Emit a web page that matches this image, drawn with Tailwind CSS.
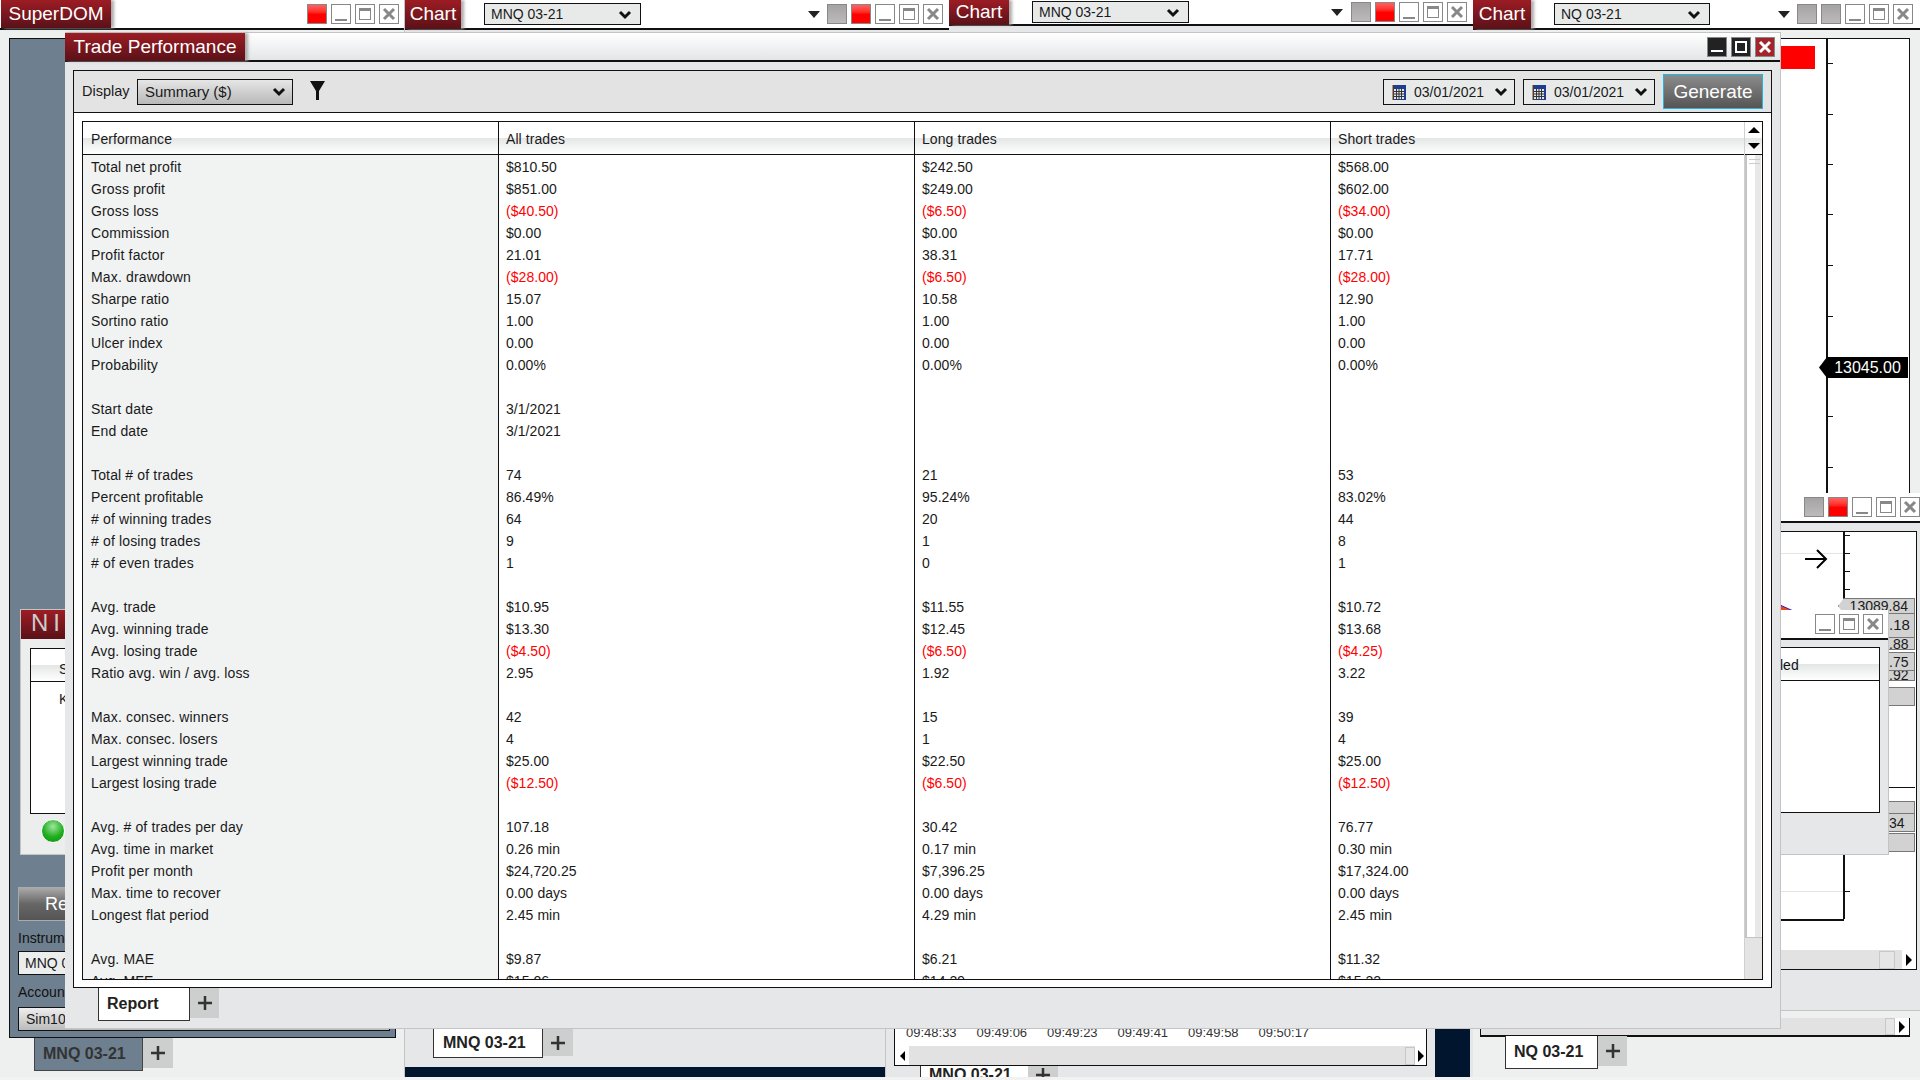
<!DOCTYPE html>
<html lang="en">
<head>
  <meta charset="UTF-8" />
  <title>Trade Performance</title>
  <script src="https://cdn.jsdelivr.net/npm/@tailwindcss/browser@4"></script>
</head>
<body class="bg-[#e5e7e9]">
<div class="relative w-[1920px] h-[1080px] overflow-hidden bg-[#e5e7e9] font-['Liberation_Sans',sans-serif] text-[14px] text-[#1a1a1a]">

  <!-- Left window: SuperDOM -->
  <div class="absolute left-0 top-0 w-[405px] h-[1077px] bg-[#eef0f0] border-r border-[#c4c4c4]">
    <div class="flex items-center h-[30px] bg-white border-b-2 border-[#111] pl-px">
      <div class="h-[28px] w-[110px] flex items-center justify-center text-[19px] text-white bg-linear-to-b from-[#9d1c24] to-[#5b1118] shadow-[3px_0_3px_#aaa]">SuperDOM</div>
      <div class="ml-[196px] flex gap-1" data-btns="red min max close"></div>
    </div>
    <div class="absolute left-[9px] top-[38px] w-[387px] h-[1000px] bg-[#6e7f8f] border border-[#111]">
      <div class="absolute left-[10px] top-[570px] w-[60px] h-[246px] bg-[#eceeee] border border-[#c4c4c4]">
        <div class="h-[29px] pl-[10px] leading-[26px] text-[24px] text-[#ccc] tracking-[5px] overflow-hidden bg-linear-to-b from-[#9d1c24] to-[#5b1118]">NI</div>
        <div class="mx-[9px] mt-[9px] h-[166px] bg-white border border-[#111]">
          <div class="h-[33px] border-b border-[#111] pl-[28px] pt-[10px] bg-[linear-gradient(#fff_50%,#e4e6e6_50%,#fff)]">S</div>
          <div class="pl-[28px] pt-[7px]">K</div>
        </div>
        <div class="ml-[20px] mt-[5px] w-[24px] h-[24px] rounded-full border border-white bg-[radial-gradient(circle_at_50%_30%,#9fe59f,#1fae1f_55%,#0f8f0f)]"></div>
      </div>
      <div class="absolute left-[8px] top-[848px] w-[60px] h-[34px] pl-[26px] flex items-center text-[18px] text-white border border-[#aaa] bg-linear-to-b from-[#aaa] via-[#666] to-[#555]">Re</div>
      <div class="absolute left-[8px] top-[889px] text-[#111]">Instrum</div>
      <div class="absolute left-[8px] top-[912px] w-[60px] h-[24px] pl-[6px] flex items-center bg-[#eceeee] border border-[#111]">MNQ 0</div>
      <div class="absolute left-[8px] top-[943px] text-[#111]">Accoun</div>
      <div class="absolute left-[8px] top-[968px] w-[372px] h-[24px] pl-[7px] flex items-center border border-[#111] bg-linear-to-b from-[#eee] to-[#bbb]">Sim10</div>
    </div>
    <div class="absolute left-[34px] top-[1038px] flex">
      <div class="w-[109px] h-[33px] flex items-center pl-[8px] font-bold text-[16px] text-[#333] bg-[#6e7f8f] border border-t-0 border-[#444]">MNQ 03-21</div>
      <div class="w-[30px] h-[30px] flex items-center justify-center bg-[#cdcfcf] text-[#333]" data-icon="plus"></div>
    </div>
  </div>

  <!-- Middle windows -->
  <div class="absolute left-[405px] top-0 w-[544px] h-[30px] flex items-center pl-[79px] bg-white border-b-2 border-[#111]">
    <div class="w-[157px]" data-select="MNQ 03-21"></div>
    <div class="ml-[167px] w-[10px]" data-icon="caret"></div>
    <div class="ml-[9px] flex gap-1" data-btns="grey red min max close"></div>
  </div>
  <div class="absolute left-[405px] top-0 w-[56px] h-[29px] flex items-center justify-center text-[19px] text-white bg-linear-to-b from-[#9d1c24] to-[#5b1118] shadow-[3px_0_3px_#aaa]">Chart</div>

  <div class="absolute left-[949px] top-0 w-[524px] h-[26px] flex items-center pl-[83px] bg-white border-b-2 border-[#111]">
    <div class="w-[157px]" data-select="MNQ 03-21"></div>
    <div class="ml-[142px] w-[10px]" data-icon="caret"></div>
    <div class="ml-[10px] flex gap-1" data-btns="grey red min max close"></div>
  </div>
  <div class="absolute left-[949px] top-0 w-[60px] h-[25px] flex items-center justify-center text-[19px] text-white bg-linear-to-b from-[#9d1c24] to-[#5b1118] shadow-[3px_0_3px_#aaa]">Chart</div>

  <!-- Middle bottom -->
  <div class="absolute left-[405px] top-[1067px] w-[480px] h-[13px] bg-[#01152f]"></div>
  <div class="absolute left-[433px] top-[1029px] flex">
    <div class="w-[110px] h-[29px] flex items-center pl-[9px] font-bold text-[16px] text-[#222] bg-white border border-t-0 border-[#333]">MNQ 03-21</div>
    <div class="w-[30px] h-[27px] flex items-center justify-center bg-[#cdcfcf] text-[#333]" data-icon="plus"></div>
  </div>
  <div class="absolute left-[885px] top-[1029px] w-[1px] h-[51px] bg-[#c4c4c4]"></div>
  <div class="absolute left-[894px] top-[1020px] w-[533px] h-[46px] bg-white border border-t-0 border-[#111]">
    <div class="flex pl-[11px] gap-[20.5px] pt-[3px] text-[13px] text-[#333]"><span class="w-[50px] shrink-0">09:48:33</span><span class="w-[50px] shrink-0">09:49:06</span><span class="w-[50px] shrink-0">09:49:23</span><span class="w-[50px] shrink-0">09:49:41</span><span class="w-[50px] shrink-0">09:49:58</span><span class="w-[50px] shrink-0">09:50:17</span></div>
    <div class="absolute left-0 right-0 bottom-0 h-[19px] flex items-center justify-between bg-[#e2e2e2]">
      <div class="w-[14px] h-full flex items-center justify-center bg-white" data-icon="left"></div>
      <div class="ml-auto w-[10px] h-[18px] bg-[#e6e6e6] border border-[#c8c8c8]"></div>
      <div class="w-[11px] h-full flex items-center justify-center bg-white" data-icon="right"></div>
    </div>
  </div>
  <div class="absolute left-[920px] top-[1066px] flex">
    <div class="w-[108px] h-[14px] overflow-hidden pl-[8px] leading-[18px] font-bold text-[16px] text-[#222] bg-white border-l border-[#333]">MNQ 03-21</div>
    <div class="w-[30px] h-[14px] overflow-hidden flex justify-center bg-[#cdcfcf] text-[#333] pt-[2px]" data-icon="plus"></div>
  </div>
  <div class="absolute left-[1435px] top-[1029px] w-[35px] h-[51px] bg-[#01152f]"></div>
  <div class="absolute left-0 top-[1077px] w-[1920px] h-[3px] bg-[#f2f2f2]"></div>

  <!-- Right window: NQ chart -->
  <div class="absolute left-[1473px] top-0 w-[447px] h-[1077px] bg-[#eef0f0]">
    <div class="flex items-center h-[30px] pl-[81px] bg-white border-b-2 border-[#111]">
      <div class="w-[156px]" data-select="NQ 03-21"></div>
      <div class="ml-[68px] w-[10px]" data-icon="caret"></div>
      <div class="ml-[9px] flex gap-1" data-btns="grey grey min max close"></div>
    </div>
    <div class="absolute left-0 top-0 w-[58px] h-[29px] flex items-center justify-center text-[19px] text-white bg-linear-to-b from-[#9d1c24] to-[#5b1118] shadow-[3px_0_3px_#aaa]">Chart</div>
    <div class="absolute left-[6px] top-[38px] w-[431px] h-[500px] bg-white border border-[#111]">
      <div class="absolute left-[301px] top-[7px] w-[34px] h-[23px] bg-[#ff0000]"></div>
      <div class="absolute left-[346px] top-0 w-[2px] h-[500px] bg-[#111]"></div>
      <div class="absolute left-[348px] top-[24px] w-[5px] h-px bg-[#111]"></div>
      <div class="absolute left-[348px] top-[75px] w-[5px] h-px bg-[#111]"></div>
      <div class="absolute left-[348px] top-[125px] w-[5px] h-px bg-[#111]"></div>
      <div class="absolute left-[348px] top-[175px] w-[5px] h-px bg-[#111]"></div>
      <div class="absolute left-[348px] top-[226px] w-[5px] h-px bg-[#111]"></div>
      <div class="absolute left-[348px] top-[277px] w-[5px] h-px bg-[#111]"></div>
      <div class="absolute left-[348px] top-[377px] w-[5px] h-px bg-[#111]"></div>
      <div class="absolute left-[348px] top-[428px] w-[5px] h-px bg-[#111]"></div>
      <div class="absolute left-[339px] top-[318px] w-[89px] h-[21px] flex items-center justify-center pl-[8px] text-[16px] text-white bg-[#000] [clip-path:polygon(8px_0,100%_0,100%_100%,8px_100%,0_50%)]">13045.00</div>
    </div>
  </div>

  <!-- Window with grey/red buttons behind -->
  <div class="absolute left-[1780px] top-[493px] w-[140px] h-[518px] bg-[#e5e7e9] border-b border-[#c4c4c4]">
    <div class="flex items-center justify-end h-[30px] bg-white border-b-2 border-[#111] gap-1" data-btns="grey red min max close"></div>
    <div class="absolute left-0 top-[38px] w-[137px] h-[439px] bg-white border border-l-0 border-[#111]">
      <div class="absolute left-[63px] top-0 w-[2px] h-[387px] bg-[#111]"></div>
      <div class="absolute left-[65px] top-[3px] w-[5px] h-px bg-[#111]"></div>
      <div class="absolute left-[65px] top-[21px] w-[5px] h-px bg-[#111]"></div>
      <div class="absolute left-[65px] top-[39px] w-[5px] h-px bg-[#111]"></div>
      <div class="absolute left-[65px] top-[57px] w-[5px] h-px bg-[#111]"></div>
      <div class="absolute left-[65px] top-[359px] w-[5px] h-px bg-[#111]"></div>
      <div class="absolute left-0 top-[21px] w-[63px] h-px bg-[#e4e4e4]"></div>
      <div class="absolute left-0 top-[359px] w-[63px] h-px bg-[#e4e4e4]"></div>
      <div class="absolute left-0 top-[387px] w-[64px] h-[2px] bg-[#111]"></div>
      <svg class="absolute left-[24px] top-[16px]" width="24" height="22" viewBox="0 0 24 22"><path d="M1 11h20M13 2l9 9-9 9" fill="none" stroke="#000" stroke-width="2"/></svg>
      <svg class="absolute left-0 top-[73px]" width="60" height="10" viewBox="0 0 60 10"><path d="M0 0L20 9H0Z" fill="#f04a10"/><path d="M0 0L20 9" stroke="#2020e0" fill="none"/><path d="M20 9H48" stroke="#d8b060" stroke-width="2"/></svg>
      <div class="absolute left-[58px] top-[66px] w-[77px] h-[16px] flex items-center justify-end pr-[6px] leading-[14px] text-[14px] bg-[#d2d2d2] border border-[#777] [clip-path:polygon(6px_0,100%_0,100%_100%,6px_100%,0_50%)]">13089.84</div>
      <div class="absolute left-[105px] top-[81px] w-[30px] h-[25px] pl-[3px] text-[15px] bg-[#d2d2d2] border border-[#777]">.18</div>
      <div class="absolute left-[105px] top-[105px] w-[30px] h-[13px] leading-[12px] pl-[3px] bg-[#d2d2d2] border border-[#777]">.88</div>
      <div class="absolute left-[105px] top-[120px] w-[30px] h-[19px] leading-[18px] pl-[3px] bg-[#d2d2d2] border border-[#777]">.75</div>
      <div class="absolute left-[105px] top-[138px] w-[30px] h-[11px] leading-[9px] pl-[3px] bg-[#d2d2d2] border border-[#777] overflow-hidden">.92</div>
      <div class="absolute left-[105px] top-[155px] w-[30px] h-[19px] bg-[#d2d2d2] border border-[#777]"></div>
      <div class="absolute left-[105px] top-[255px] w-[30px] h-px bg-[#111]"></div>
      <div class="absolute left-[105px] top-[269px] w-[30px] h-[13px] bg-[#d2d2d2] border border-[#777]"></div>
      <div class="absolute left-[105px] top-[281px] w-[30px] h-[19px] leading-[18px] pl-[3px] bg-[#d2d2d2] border border-[#777]">34</div>
      <div class="absolute left-[105px] top-[301px] w-[30px] h-[19px] bg-[#d2d2d2] border border-[#777]"></div>
      <div class="absolute left-0 right-0 bottom-0 h-[19px] flex items-center justify-end bg-[#e2e2e2]">
        <div class="w-[16px] h-[18px] bg-[#e6e6e6] border border-[#c8c8c8]"></div>
        <div class="ml-[7px] w-[14px] h-full flex items-center justify-center bg-white" data-icon="right"></div>
      </div>
    </div>
  </div>
  <!-- Strip under that window -->
  <div class="absolute left-[1781px] top-[1018px] w-[129px] h-[19px] flex items-center justify-end bg-[#e2e2e2] border-b-2 border-[#111] border-r">
    <div class="w-[10px] h-[17px] bg-[#e6e6e6] border border-[#c8c8c8]"></div>
    <div class="w-[14px] h-full flex items-center justify-center bg-white" data-icon="right"></div>
  </div>
  <div class="absolute left-[1480px] top-[1018px] w-[301px] h-[19px] bg-[#e2e2e2] border-b-2 border-l border-[#111]"></div>
  <div class="absolute left-[1505px] top-[1036px] flex">
    <div class="w-[93px] h-[33px] flex items-center pl-[8px] font-bold text-[16px] text-[#222] bg-white border border-t-0 border-[#333]">NQ 03-21</div>
    <div class="w-[29px] h-[30px] flex items-center justify-center bg-[#cdcfcf] text-[#333]" data-icon="plus"></div>
  </div>

  <!-- Small window over the chart -->
  <div class="absolute left-[1780px] top-[610px] w-[109px] h-[245px] bg-[#e5e7e9] border-r border-b border-[#c4c4c4]">
    <div class="flex items-center justify-end h-[30px] bg-white border-b-2 border-[#111] gap-1 pr-[5px]" data-btns="min max close"></div>
    <div class="absolute left-0 top-[37px] w-[100px] h-[166px] bg-white border border-l-0 border-[#111]">
      <div class="h-[33px] border-b border-[#111] text-[#111] pt-[7px] bg-[linear-gradient(#fff_50%,#e4e6e6_50%,#fff)]">led</div>
    </div>
  </div>

  <!-- Trade Performance window -->
  <div class="absolute left-[65px] top-[32px] w-[1716px] h-[997px] flex flex-col bg-[#e5e7e9] border-t border-r border-b border-[#c4c4c4]">
    <div class="relative flex items-center justify-end h-[29px] pr-[5px] gap-1 bg-linear-to-b from-white to-[#e3e5e7] border-b-2 border-[#111]">
      <div class="absolute left-0 top-0 w-[180px] h-[28px] flex items-center justify-center text-[19px] text-white bg-linear-to-b from-[#9d1c24] to-[#5b1118] shadow-[3px_0_3px_#aaa]">Trade Performance</div>
      <div class="w-[20px] h-[20px] flex items-center justify-center bg-[#222] border border-[#888]" data-icon="dmin"></div>
      <div class="w-[20px] h-[20px] flex items-center justify-center bg-[#222] border border-[#888]" data-icon="dmax"></div>
      <div class="w-[20px] h-[20px] flex items-center justify-center bg-[#a3252c] border border-[#888]" data-icon="dclose"></div>
    </div>
    <div class="mx-[8px] mt-[8px] h-[918px] flex flex-col bg-white border border-[#111]">
      <div class="flex items-center h-[42px] px-[8px] bg-[#e3e3e3] border-b border-[#111]">
        <span class="w-[47px] text-[14.5px]">Display</span>
        <div class="ml-[8px] w-[156px] h-[26px] flex items-center justify-between pl-[7px] pr-[6px] pt-px text-[15px] border border-[#111] bg-linear-to-b from-[#e6e6e6] to-[#b8b8b8]">Summary ($)<span data-icon="chev"></span></div>
        <svg class="ml-[17px] -mt-[3px]" width="15" height="19" viewBox="0 0 15 19"><path d="M0 0H15L9 10V19H6V10Z" fill="#111"/></svg>
        <div class="ml-auto w-[132px] h-[26px] flex items-center pl-[8px] pr-[6px] pt-px gap-[8px] bg-[#e8eaea] border border-[#111]"><span data-icon="cal"></span>03/01/2021<span class="ml-auto" data-icon="chev"></span></div>
        <div class="ml-[8px] w-[132px] h-[26px] flex items-center pl-[8px] pr-[6px] pt-px gap-[8px] bg-[#e8eaea] border border-[#111]"><span data-icon="cal"></span>03/01/2021<span class="ml-auto" data-icon="chev"></span></div>
        <div class="ml-[8px] w-[100px] h-[35px] flex items-center justify-center pt-px text-[19px] text-white border border-[#1fb6e0] bg-linear-to-b from-[#8c8c8c] to-[#555]">Generate</div>
      </div>
      <div class="relative mx-[8px] mt-[8px] h-[859px] overflow-hidden bg-white border border-[#111]">
        <div class="grid grid-cols-[415px_416px_416px_1fr] h-[33px] border-b border-[#111] bg-[linear-gradient(#fff_50%,#e4e6e6_50%,#fff)]">
          <div class="pl-[8px] pt-[7px] tracking-[0.08px]">Performance</div>
          <div class="pl-[7px] pt-[7px] tracking-[0.08px] border-l border-[#111]">All trades</div>
          <div class="pl-[7px] pt-[7px] tracking-[0.08px] border-l border-[#111]">Long trades</div>
          <div class="pl-[7px] pt-[7px] tracking-[0.08px] border-l border-[#111]">Short trades</div>
        </div>
        <div id="rows" class="pt-[1px]"></div>
        <!-- scrollbar -->
        <div class="absolute right-0 top-0 w-[18px] h-full flex flex-col bg-[#e4e4e4] border-l border-[#d0d0d0]">
          <div class="h-[33px] flex flex-col items-center justify-center gap-[10px] bg-[linear-gradient(#fff_50%,#e4e6e6_50%,#fff)] border-b border-[#111]">
            <svg width="12" height="6" viewBox="0 0 12 6"><path d="M6 0L12 6H0Z" fill="#000"/></svg>
            <svg width="12" height="6" viewBox="0 0 12 6"><path d="M0 0H12L6 6Z" fill="#000"/></svg>
          </div>
          <div class="relative h-[783px] bg-[linear-gradient(90deg,#fff_50%,#e8e8e8_50%,#e8e8e8_90%,#fff_90%)] border-l-2 border-b border-[#c4c4c4]">
            <div class="mx-[2px] mt-[4px] h-[1px] bg-[#ccc]"></div>
            <div class="mx-[2px] mt-[3px] h-[1px] bg-[#ccc]"></div>
          </div>
        </div>
      </div>
    </div>
    <div class="relative h-[33px]">
      <div class="absolute left-[33px] top-0 flex">
        <div class="w-[92px] h-[33px] flex items-center pl-[8px] font-bold text-[16px] text-[#222] bg-white border border-t-0 border-[#333]">Report</div>
        <div class="w-[29px] h-[30px] flex items-center justify-center bg-[#cdcfcf] text-[#333]" data-icon="plus"></div>
      </div>
    </div>
  </div>
</div>

<script>
  const icons = {
    min: '<svg width="18" height="18" viewBox="0 0 18 18"><rect x="3" y="14" width="12" height="2" fill="#888"/></svg>',
    max: '<svg width="18" height="18" viewBox="0 0 18 18"><rect x="3.5" y="3.5" width="11" height="11" fill="none" stroke="#888"/><rect x="3" y="3" width="12" height="3" fill="#888"/></svg>',
    close: '<svg width="18" height="18" viewBox="0 0 18 18"><path d="M4 4L14 14M14 4L4 14" stroke="#888" stroke-width="3"/></svg>',
    plus: '<svg width="14" height="14" viewBox="0 0 14 14"><path d="M7 0V14M0 7H14" stroke="#333" stroke-width="2.5"/></svg>',
    caret: '<svg width="12" height="7" viewBox="0 0 12 7"><path d="M0 0H12L6 7Z" fill="#222"/></svg>',
    chev: '<svg width="14" height="10" viewBox="0 0 14 10"><path d="M2 2L7 7L12 2" fill="none" stroke="#111" stroke-width="3"/></svg>',
    left: '<svg width="5" height="10" viewBox="0 0 5 10"><path d="M5 0V10L0 5Z" fill="#000"/></svg>',
    right: '<svg width="6" height="12" viewBox="0 0 6 12"><path d="M0 0V12L6 6Z" fill="#000"/></svg>',
    dmin: '<svg width="14" height="14" viewBox="0 0 14 14"><rect x="1" y="10" width="12" height="2" fill="#fff"/></svg>',
    dmax: '<svg width="14" height="14" viewBox="0 0 14 14"><rect x="2" y="2" width="10" height="10" fill="none" stroke="#fff" stroke-width="2"/></svg>',
    dclose: '<svg width="14" height="14" viewBox="0 0 14 14"><path d="M2 2L12 12M12 2L2 12" stroke="#fff" stroke-width="3"/></svg>',
    cal: '<svg class="block" width="14" height="15" viewBox="0 0 14 15"><rect width="14" height="15" fill="#e08a2c"/><rect x="1" width="13" height="15" fill="#1c3f8f"/><rect x="2" y="4" width="10" height="10" fill="#e6e6e6"/><path d="M4.5 4V14M7 4V14M9.5 4V14M2 6.5H12M2 9H12M2 11.5H12" stroke="#333"/></svg>'
  };
  const btnClass = {
    grey: 'w-[20px] h-[20px] border border-[#888] bg-linear-to-b from-[#a5a3a3] to-[#bcbaba]',
    red: 'w-[20px] h-[20px] border border-[#888] bg-linear-to-b from-[#ff6060] via-[#ff0000] to-[#ff0000]',
    min: 'w-[20px] h-[20px] border border-[#888] bg-white',
    max: 'w-[20px] h-[20px] border border-[#888] bg-white',
    close: 'w-[20px] h-[20px] border border-[#888] bg-white'
  };
  document.querySelectorAll('[data-btns]').forEach(el => {
    el.innerHTML = el.dataset.btns.split(' ').map(b => `<div class="${btnClass[b]}">${icons[b] || ''}</div>`).join('');
  });
  document.querySelectorAll('[data-select]').forEach(el => {
    el.innerHTML = `<div class="h-[22px] flex items-center justify-between pl-[6px] pr-[8px] pt-px bg-[#e8eaea] border border-[#111]">${el.dataset.select}${icons.chev}</div>`;
  });
  document.querySelectorAll('[data-icon]').forEach(el => {
    el.innerHTML = icons[el.dataset.icon];
  });

  const rows = [
    ['Total net profit', '$810.50', '$242.50', '$568.00'],
    ['Gross profit', '$851.00', '$249.00', '$602.00'],
    ['Gross loss', '($40.50)', '($6.50)', '($34.00)'],
    ['Commission', '$0.00', '$0.00', '$0.00'],
    ['Profit factor', '21.01', '38.31', '17.71'],
    ['Max. drawdown', '($28.00)', '($6.50)', '($28.00)'],
    ['Sharpe ratio', '15.07', '10.58', '12.90'],
    ['Sortino ratio', '1.00', '1.00', '1.00'],
    ['Ulcer index', '0.00', '0.00', '0.00'],
    ['Probability', '0.00%', '0.00%', '0.00%'],
    ['', '', '', ''],
    ['Start date', '3/1/2021', '', ''],
    ['End date', '3/1/2021', '', ''],
    ['', '', '', ''],
    ['Total # of trades', '74', '21', '53'],
    ['Percent profitable', '86.49%', '95.24%', '83.02%'],
    ['# of winning trades', '64', '20', '44'],
    ['# of losing trades', '9', '1', '8'],
    ['# of even trades', '1', '0', '1'],
    ['', '', '', ''],
    ['Avg. trade', '$10.95', '$11.55', '$10.72'],
    ['Avg. winning trade', '$13.30', '$12.45', '$13.68'],
    ['Avg. losing trade', '($4.50)', '($6.50)', '($4.25)'],
    ['Ratio avg. win / avg. loss', '2.95', '1.92', '3.22'],
    ['', '', '', ''],
    ['Max. consec. winners', '42', '15', '39'],
    ['Max. consec. losers', '4', '1', '4'],
    ['Largest winning trade', '$25.00', '$22.50', '$25.00'],
    ['Largest losing trade', '($12.50)', '($6.50)', '($12.50)'],
    ['', '', '', ''],
    ['Avg. # of trades per day', '107.18', '30.42', '76.77'],
    ['Avg. time in market', '0.26 min', '0.17 min', '0.30 min'],
    ['Profit per month', '$24,720.25', '$7,396.25', '$17,324.00'],
    ['Max. time to recover', '0.00 days', '0.00 days', '0.00 days'],
    ['Longest flat period', '2.45 min', '4.29 min', '2.45 min'],
    ['', '', '', ''],
    ['Avg. MAE', '$9.87', '$6.21', '$11.32'],
    ['Avg. MFE', '$15.06', '$14.29', '$15.22']
  ];
  document.getElementById('rows').innerHTML = '<div class="absolute left-0 top-[33px] bottom-0 w-[415px] bg-[#f1f3f3]"></div>'
    + '<div class="absolute left-[415px] top-0 bottom-0 w-px bg-[#111]"></div>'
    + '<div class="absolute left-[831px] top-0 bottom-0 w-px bg-[#111]"></div>'
    + '<div class="absolute left-[1247px] top-0 bottom-0 w-px bg-[#111]"></div>'
    + rows.map(r => '<div class="relative grid grid-cols-[415px_416px_416px_1fr] h-[22px] leading-[22px]">'
      + r.map((v, i) => `<div class="pl-[8px] ${i === 0 ? 'tracking-[0.15px]' : 'tracking-[0.05px]'}${v[0] === '(' ? ' text-[#ff0000]' : ''}">${v}</div>`).join('')
      + '</div>').join('');
</script>
</body>
</html>
